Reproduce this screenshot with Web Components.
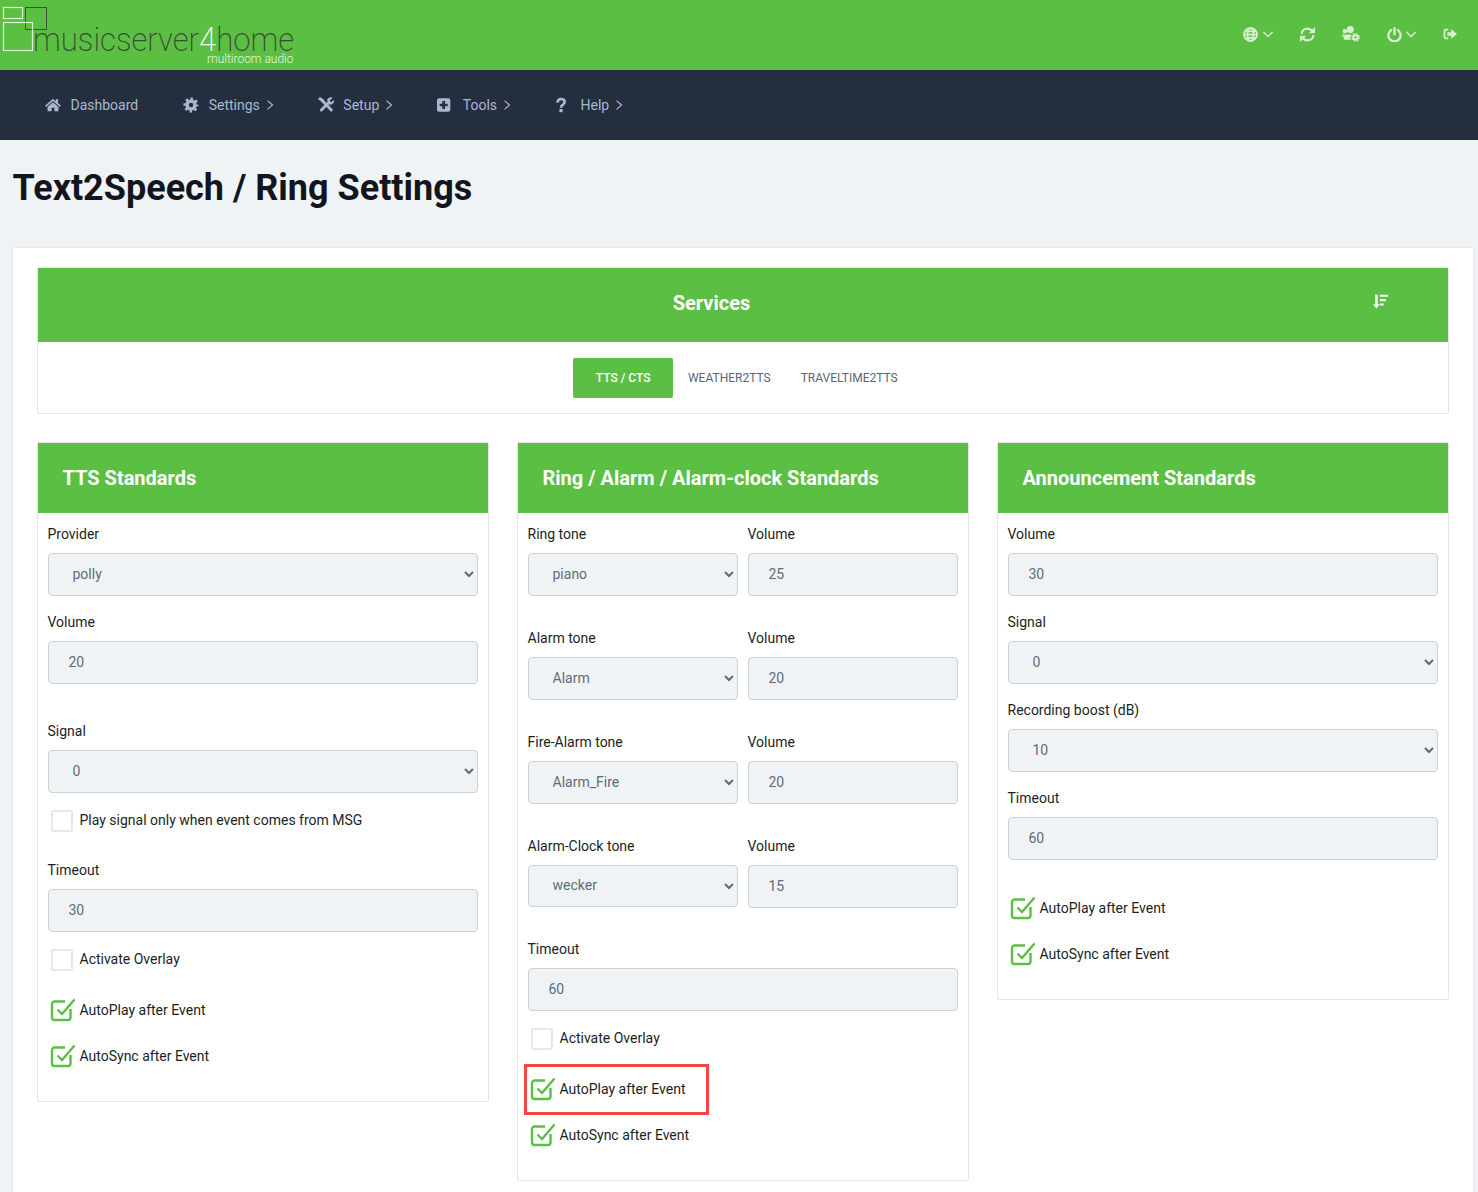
<!DOCTYPE html>
<html lang="en">
<head>
<meta charset="utf-8">
<title>Text2Speech / Ring Settings</title>
<style>
  :root {
    --green: #5bbf43;
    --navy: #242e3f;
    --page: #eff3f6;
    --line: #e3e6ea;
  }
  html, body { margin: 0; height: 1192px; overflow: hidden; }
  body { background: var(--page); font-family: Roboto, "Liberation Sans", sans-serif; font-size: 14px; color: #1b1f24; }
</style>
</head>
<body>
  <ms-topbar></ms-topbar>
  <ms-nav>
    <ms-nav-item icon="home" first>Dashboard</ms-nav-item>
    <ms-nav-item icon="cog" more>Settings</ms-nav-item>
    <ms-nav-item icon="tools" more>Setup</ms-nav-item>
    <ms-nav-item icon="plus" more>Tools</ms-nav-item>
    <ms-nav-item icon="question" more>Help</ms-nav-item>
  </ms-nav>
  <ms-page title-text="Text2Speech / Ring Settings">
    <ms-services></ms-services>
    <ms-columns>
      <ms-panel heading="TTS Standards">
        <ms-field label="Provider" kind="select" value="polly"></ms-field>
        <ms-field label="Volume" value="20" style="--mb:37px"></ms-field>
        <ms-field label="Signal" kind="select" value="0" style="--mb:4px"></ms-field>
        <ms-check style="--mb:17px">Play signal only when event comes from MSG</ms-check>
        <ms-field label="Timeout" value="30" style="--mb:4px"></ms-field>
        <ms-check style="--mb:5px">Activate Overlay</ms-check>
        <ms-check checked>AutoPlay after Event</ms-check>
        <ms-check checked>AutoSync after Event</ms-check>
      </ms-panel>
      <ms-panel heading="Ring / Alarm / Alarm-clock Standards">
        <ms-pair>
          <ms-field label="Ring tone" kind="select" value="piano" style="--mb:32px"></ms-field>
          <ms-field label="Volume" value="25" style="--mb:32px"></ms-field>
          <ms-field label="Alarm tone" kind="select" value="Alarm" style="--mb:32px"></ms-field>
          <ms-field label="Volume" value="20" style="--mb:32px"></ms-field>
          <ms-field label="Fire-Alarm tone" kind="select" value="Alarm_Fire" style="--mb:32px"></ms-field>
          <ms-field label="Volume" value="20" style="--mb:32px"></ms-field>
          <ms-field label="Alarm-Clock tone" kind="select" value="wecker" style="--mb:31px;--ch:42px"></ms-field>
          <ms-field label="Volume" value="15" style="--mb:31px"></ms-field>
        </ms-pair>
        <ms-field label="Timeout" value="60" style="--mb:4px"></ms-field>
        <ms-check style="--mb:5px">Activate Overlay</ms-check>
        <ms-check checked marked>AutoPlay after Event</ms-check>
        <ms-check checked>AutoSync after Event</ms-check>
      </ms-panel>
      <ms-panel heading="Announcement Standards">
        <ms-field label="Volume" value="30"></ms-field>
        <ms-field label="Signal" kind="select" value="0"></ms-field>
        <ms-field label="Recording boost (dB)" kind="select" value="10"></ms-field>
        <ms-field label="Timeout" value="60" style="--mb:25px"></ms-field>
        <ms-check checked>AutoPlay after Event</ms-check>
        <ms-check checked>AutoSync after Event</ms-check>
      </ms-panel>
    </ms-columns>
  </ms-page>

<script>
const ICONS = {
  home: `<path fill="currentColor" d="M12 2.500 0 13l1.600 1.900L12 5.900l10.400 9L24 13l-4.500-3.900V3.500h-3.200v2.800zM3.800 15v6.500H10V16h4v5.500h6.200V15L12 8z"/>`,
  cog: `<circle cx="12" cy="12" r="6" fill="none" stroke="currentColor" stroke-width="5.400"/><circle cx="12" cy="12" r="9.400" fill="none" stroke="currentColor" stroke-width="3.800" stroke-dasharray="3.690 3.690" stroke-dashoffset="1.850"/>`,
  tools: `<path fill="none" stroke="currentColor" stroke-width="4.400" stroke-linecap="round" d="M5 19.500 15.500 9M7 6l13 13.500"/><path fill="currentColor" d="M0 3 3 0l6 4v4H6zM13.500 5C14.500 1.500 18.500-.5 22 1l-4 3.800.5 2.200 2 .6L24 4c1 4-2 8-6.500 7.500z"/>`,
  plus: `<path transform="translate(-2 0)" fill="currentColor" fill-rule="evenodd" d="M5 2h14a3 3 0 0 1 3 3v14a3 3 0 0 1-3 3H5a3 3 0 0 1-3-3V5a3 3 0 0 1 3-3zm5 4v4H6v4h4v4h4v-4h4v-4h-4V6z"/>`,
  question: `<g transform="translate(-3 0)"><path fill="none" stroke="currentColor" stroke-width="4" d="M6.500 8.500C7 5 9.500 3 12.200 3c3 0 5.300 1.900 5.300 4.600 0 3.900-5.500 3.900-5.500 8.400"/><rect x="9.600" y="18" width="4.800" height="4.800" fill="currentColor"/></g>`,
  globe: `<g fill="none" stroke="currentColor" stroke-width="2.800"><circle cx="12" cy="12" r="10.400"/><ellipse cx="12" cy="12" rx="4.800" ry="10.400"/><path d="M2 12h20M3.500 6.800h17M3.500 17.200h17"/></g>`,
  refresh: `<g fill="none" stroke="currentColor" stroke-width="3.600"><path d="M2.500 11C3 6 7 2.500 12 2.500c3 0 5.500 1.300 7.300 3.500"/><path d="M21.500 13c-.5 5-4.500 8.500-9.500 8.500-3 0-5.500-1.300-7.300-3.500"/></g><path fill="currentColor" d="M24 0v10H14zM0 24V14h10z"/>`,
  users: `<circle cx="11" cy="6" r="4.800" fill="currentColor"/><circle cx="3.800" cy="8.300" r="3" fill="currentColor"/><path fill="currentColor" d="M5.800 12.500h10.400c2 0 3.300 1.500 3.300 3.500v3.500H3.500c-.8 0-1.300-.5-1.300-1.300V16c0-2 1.500-3.500 3.600-3.500zM0 16c0-2.200 1-4 3-4.200h1c-1.500 1-2.500 2.500-2.500 4.200z"/><circle cx="18" cy="16.500" r="7" fill="var(--green)"/><circle cx="18" cy="16.500" r="2.900" fill="none" stroke="currentColor" stroke-width="2.800"/><circle cx="18" cy="16.500" r="5" fill="none" stroke="currentColor" stroke-width="2" stroke-dasharray="1.960 1.960"/>`,
  power: `<g fill="none" stroke="currentColor" stroke-width="3.800" stroke-linecap="round"><path d="M6.500 5a9.800 9.800 0 1 0 11 0"/><path d="M12 2v9.500"/></g>`,
  signout: `<path fill="currentColor" d="M9 3H5a4 4 0 0 0-4 4v10a4 4 0 0 0 4 4h4v-3H5.500A1.500 1.500 0 0 1 4 16.500v-9A1.500 1.500 0 0 1 5.500 6H9zM14 3.500V9H7.500v6H14v5.500L24 12z"/>`,
  sort: `<path fill="currentColor" d="M3.500 1h4v15.500H11L5.500 23 0 16.500h3.500zM11 1h13v3.400H11zM11 8h10v3.400H11zM11 15h6v3.400h-6z"/>`,
  chev: `<path fill="none" stroke="currentColor" stroke-width="3" d="M1 7l11 11L23 7"/>`,
  next: `<path fill="none" stroke="currentColor" stroke-width="2.800" d="M6 1.500 18 12 6 22.500"/>`
};

class MsIcon extends HTMLElement {
  connectedCallback() {
    const w = this.getAttribute("w") || 16;
    const h = this.getAttribute("h") || w;
    this.attachShadow({ mode: "open" });
    this.shadowRoot.innerHTML = `
    <style>
      :host { display: inline-flex; flex: none; }
      svg { display: block; }
    </style>
    <svg width="${w}" height="${h}" viewBox="0 0 24 24" aria-hidden="true">${ICONS[this.getAttribute("name")]}</svg>
    `;
  }
}
customElements.define("ms-icon", MsIcon);

class MsTopbar extends HTMLElement {
  connectedCallback() {
    this.attachShadow({ mode: "open" });
    this.shadowRoot.innerHTML = `
    <style>
      :host {
        align-items: center;
        background-color: var(--green);
        color: #d9f1d2;
        display: flex;
        height: 70px;
        justify-content: space-between;
      }
      .logo {
        height: 70px;
        overflow: hidden;
        position: relative;
        width: 310px;
      }
      .squares { left: 0; position: absolute; top: 0; }
      .name {
        color: #3a4a3a;
        font: 200 34px/24px Roboto, sans-serif;
        left: 33px;
        position: absolute;
        top: 27px;
        transform: scaleX(.915);
        transform-origin: left;
        white-space: nowrap;
      }
      .name b { color: #fff; font-weight: 200; }
      .sub {
        color: #e6f6e0;
        font: 300 12px/12px Roboto, sans-serif;
        left: 207px;
        position: absolute;
        top: 53px;
        white-space: nowrap;
      }
      .tools { align-items: center; display: flex; gap: 27px; margin-right: 21px; margin-top: -2px; }
      .g { align-items: center; display: flex; gap: 4px; }
      .g.wide { gap: 5px; }
    </style>
    <div class="logo">
      <svg class="squares" width="50" height="54" fill="none">
        <rect x="25.500" y="7.500" width="21" height="22" stroke="#39573a" stroke-width="1"/>
        <rect x="3.500" y="7.500" width="19" height="11" stroke="#dff3d8" stroke-width="1.200"/>
        <rect x="3.500" y="22.500" width="29" height="28" stroke="#dff3d8" stroke-width="1.200"/>
      </svg>
      <span class="name">musicserver<b>4</b>home</span>
      <span class="sub">multiroom audio</span>
    </div>
    <div class="tools">
      <div class="g wide"><ms-icon name="globe" w="15"></ms-icon><ms-icon name="chev" w="10"></ms-icon></div>
      <div class="g"><ms-icon name="refresh" w="15"></ms-icon></div>
      <div class="g"><ms-icon name="users" w="18"></ms-icon></div>
      <div class="g"><ms-icon name="power" w="15"></ms-icon><ms-icon name="chev" w="10"></ms-icon></div>
      <div class="g"><ms-icon name="signout" w="14"></ms-icon></div>
    </div>
    `;
  }
}
customElements.define("ms-topbar", MsTopbar);

class MsNav extends HTMLElement {
  connectedCallback() {
    this.attachShadow({ mode: "open" });
    this.shadowRoot.innerHTML = `
    <style>
      :host {
        align-items: center;
        background-color: var(--navy);
        display: flex;
        gap: 44px;
        height: 70px;
        padding-left: 45px;
      }
    </style>
    <slot></slot>
    `;
  }
}
customElements.define("ms-nav", MsNav);

class MsNavItem extends HTMLElement {
  connectedCallback() {
    this.attachShadow({ mode: "open" });
    this.shadowRoot.innerHTML = `
    <style>
      :host {
        align-items: center;
        color: #a9b8d0;
        display: flex;
        font-size: 14px;
      }
      :host([first]) { margin-right: 1px; }
      .ic { display: flex; justify-content: flex-start; width: 25.500px; }
      ms-icon[name="next"] { margin: 0 -1px 0 5px; }
    </style>
    <span class="ic"><ms-icon name="${this.getAttribute("icon")}" w="16"></ms-icon></span>
    <slot></slot>
    ${this.hasAttribute("more") ? `<ms-icon name="next" w="10"></ms-icon>` : ``}
    `;
  }
}
customElements.define("ms-nav-item", MsNavItem);

class MsPage extends HTMLElement {
  connectedCallback() {
    this.attachShadow({ mode: "open" });
    this.shadowRoot.innerHTML = `
    <style>
      :host { display: block; padding: 0 4px 0 12px; }
      h1 {
        color: #12161c;
        font: 700 36px/42px Roboto, sans-serif;
        margin: 0;
        padding: 27px 0 38px .5px;
      }
      .card {
        background-color: #fff;
        border: 1px solid #e8ebef;
        border-bottom: 0;
        box-sizing: border-box;
        height: 945px;
        padding: 19px 24px 0;
      }
    </style>
    <h1>${this.getAttribute("title-text")}</h1>
    <div class="card"><slot></slot></div>
    `;
  }
}
customElements.define("ms-page", MsPage);

class MsServices extends HTMLElement {
  connectedCallback() {
    this.attachShadow({ mode: "open" });
    this.shadowRoot.innerHTML = `
    <style>
      :host {
        border: 1px solid var(--line);
        border-radius: 2px;
        display: block;
        margin-bottom: 28px;
      }
      header {
        align-items: center;
        background-color: var(--green);
        color: #fff;
        display: flex;
        height: 74px;
        padding-right: 60px;
      }
      h2 {
        flex: 1;
        font: 700 20px/1 Roboto, sans-serif;
        margin: -4px 0 0;
        padding-left: 12px;
        text-align: center;
      }
      ms-icon { margin-top: -8px; }
      nav {
        align-items: center;
        display: flex;
        font-size: 12px;
        height: 71px;
        justify-content: center;
      }
      a { color: #5c6673; line-height: 40px; padding: 0 15px; }
      a.active {
        background-color: var(--green);
        border-radius: 2px;
        color: #fff;
        font-weight: 500;
        padding: 0 22.500px;
      }
    </style>
    <header><h2>Services</h2><ms-icon name="sort" w="15"></ms-icon></header>
    <nav>
      <a class="active">TTS / CTS</a>
      <a>WEATHER2TTS</a>
      <a>TRAVELTIME2TTS</a>
    </nav>
    `;
  }
}
customElements.define("ms-services", MsServices);

class MsColumns extends HTMLElement {
  connectedCallback() {
    this.attachShadow({ mode: "open" });
    this.shadowRoot.innerHTML = `
    <style>
      :host {
        align-items: start;
        display: grid;
        gap: 28px;
        grid-template-columns: repeat(3, 1fr);
      }
    </style>
    <slot></slot>
    `;
  }
}
customElements.define("ms-columns", MsColumns);

class MsPanel extends HTMLElement {
  connectedCallback() {
    this.attachShadow({ mode: "open" });
    this.shadowRoot.innerHTML = `
    <style>
      :host {
        background-color: #fff;
        border: 1px solid var(--line);
        border-radius: 2px;
        display: block;
        min-width: 0;
      }
      h3 {
        background-color: var(--green);
        color: #fff;
        font: 700 20px/70px Roboto, sans-serif;
        margin: 0;
        padding-left: 24.500px;
      }
      .body { padding: 11px 10px 22px; }
    </style>
    <h3>${this.getAttribute("heading")}</h3>
    <div class="body"><slot></slot></div>
    `;
  }
}
customElements.define("ms-panel", MsPanel);

class MsPair extends HTMLElement {
  connectedCallback() {
    this.attachShadow({ mode: "open" });
    this.shadowRoot.innerHTML = `
    <style>
      :host {
        display: grid;
        column-gap: 10px;
        grid-template-columns: 1fr 1fr;
      }
    </style>
    <slot></slot>
    `;
  }
}
customElements.define("ms-pair", MsPair);

class MsField extends HTMLElement {
  connectedCallback() {
    const value = this.getAttribute("value");
    const control = this.getAttribute("kind") === "select"
      ? `<select><option>${value}</option></select>`
      : `<input value="${value}">`;
    this.attachShadow({ mode: "open" });
    this.shadowRoot.innerHTML = `
    <style>
      :host {
        display: block;
        margin-bottom: var(--mb, 16px);
        min-width: 0;
      }
      label {
        color: #1b1f24;
        display: block;
        font-size: 14px;
        line-height: 21px;
        margin: 0 0 8px -.5px;
      }
      input, select {
        background-color: var(--page);
        border: 1px solid #cdd2d9;
        border-radius: 4px;
        box-sizing: border-box;
        color: #5f6b7a;
        display: block;
        font: 14px Roboto, sans-serif;
        height: var(--ch, 43px);
        outline: none;
        padding: 0 19.500px 2px;
        width: 100%;
      }
      select { padding-right: 5px; }
    </style>
    <label>${this.getAttribute("label")}</label>
    ${control}
    `;
  }
}
customElements.define("ms-field", MsField);

class MsCheck extends HTMLElement {
  connectedCallback() {
    const box = this.hasAttribute("checked")
      ? `<svg width="26" height="26" viewBox="0 0 26 26" fill="none" stroke="#5bbf43" stroke-width="2.400">
           <path d="M20.500 12v8.500a2.500 2.500 0 0 1-2.500 2.500H4.500A2.500 2.500 0 0 1 2 20.500V7a2.500 2.500 0 0 1 2.500-2.500H15"/>
           <path d="M7.500 12.500l4.500 4.500L24.500 2.500"/>
         </svg>`
      : `<span class="empty"></span>`;
    this.attachShadow({ mode: "open" });
    this.shadowRoot.innerHTML = `
    <style>
      :host {
        align-items: center;
        color: #1b1f24;
        display: flex;
        font-size: 14px;
        height: 46px;
        margin-bottom: var(--mb, 0);
        position: relative;
      }
      .box {
        align-items: center;
        display: flex;
        padding-left: 2px;
        width: 29.500px;
      }
      .empty {
        border: 2px solid #e8e8e8;
        border-radius: 2px;
        box-sizing: border-box;
        height: 22px;
        margin: 1px 0 0 1px;
        width: 22px;
      }
      svg { display: block; }
      .mark {
        border: 3px solid #f54545;
        bottom: -3px;
        box-sizing: border-box;
        left: -4px;
        position: absolute;
        top: -2px;
        width: 185px;
      }
    </style>
    <span class="box">${box}</span>
    <span><slot></slot></span>
    ${this.hasAttribute("marked") ? `<span class="mark"></span>` : ``}
    `;
  }
}
customElements.define("ms-check", MsCheck);
</script>
</body>
</html>
